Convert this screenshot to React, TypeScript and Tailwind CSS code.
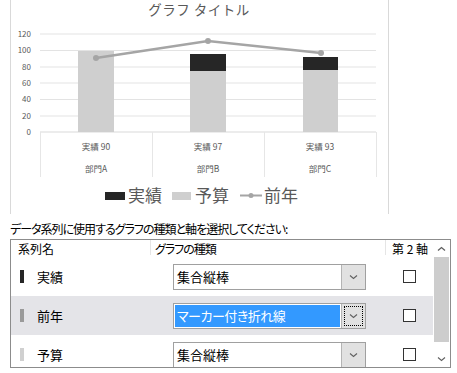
import { ReactElement } from "react";

const FONT = "'Noto Sans CJK JP', 'Noto Sans', sans-serif";

export default function App(): ReactElement {
  return (
    <div className="w-[457px] h-[373px] bg-white overflow-hidden font-['Noto_Sans_CJK_JP',sans-serif] text-black">
      <div className="ml-[10px] w-[379px] h-[214px] border-x border-[#d9d9d9]">
        <Chart />
      </div>
      <p className="ml-[10px] mt-[7px] h-[16px] text-[12px] leading-[16px] tracking-[-1px] [font-feature-settings:'palt'] whitespace-nowrap">
        データ系列に使用するグラフの種類と軸を選択してください:
      </p>
      <div className="ml-[10px] mt-[2px] w-[441px] h-[129px] border border-[#8c8c8c] flex overflow-hidden">
        <div className="flex-1 flex flex-col">
          <Header />
          <Row name="実績" marker="bg-[#262626]" />
          <Row name="前年" marker="bg-[#9a9a9a]" selected />
          <Row name="予算" marker="bg-[#d0d0d0]" />
        </div>
        <Scrollbar />
      </div>
    </div>
  );
}

const Chart = () => {
  const grid = [34, 50.5, 67, 83, 99.5, 116];
  const labels = ["120", "100", "80", "60", "40", "20", "0"];
  const cats = [
    { x: 96, a: "実績 90", b: "部門A" },
    { x: 208, a: "実績 97", b: "部門B" },
    { x: 320, a: "実績 93", b: "部門C" },
  ];
  return (
    <svg width="377" height="214" viewBox="11 0 377 214" fontFamily={FONT}>
      <text x="199" y="15" fontSize="13.5" fill="#595959" textAnchor="middle" letterSpacing="0.5">
        グラフ タイトル
      </text>
      {grid.map((y) => (
        <line key={y} x1="40" x2="376" y1={y} y2={y} stroke="#e3e3e3" strokeWidth="1" />
      ))}
      <line x1="40" x2="376" y1="132" y2="132" stroke="#d9d9d9" strokeWidth="1" />
      {[40, 152, 264, 376].map((x) => (
        <line key={x} x1={x + 0.5} x2={x + 0.5} y1="132" y2="177" stroke="#e6e6e6" strokeWidth="1" />
      ))}
      {labels.map((l, i) => (
        <text key={l} x="31" y={34 + i * 16.33 + 3} fontSize="8" fill="#595959" textAnchor="end">
          {l}
        </text>
      ))}
      {cats.map((c) => (
        <g key={c.b}>
          <text x={c.x} y="150" fontSize="8.5" fill="#595959" textAnchor="middle">
            {c.a}
          </text>
          <text x={c.x} y="172" fontSize="8.5" fill="#595959" textAnchor="middle">
            {c.b}
          </text>
        </g>
      ))}
      {/* bars */}
      <rect x="78" y="51" width="36" height="81" fill="#cfcfcf" />
      <rect x="190" y="71" width="36" height="61" fill="#cfcfcf" />
      <rect x="190" y="54" width="36" height="17" fill="#262626" />
      <rect x="303" y="70" width="35" height="62" fill="#cfcfcf" />
      <rect x="303" y="57" width="35" height="13" fill="#262626" />
      {/* line */}
      <polyline points="96,58 208,41 321,53" fill="none" stroke="#a5a5a5" strokeWidth="2.5" />
      {[
        [96, 58],
        [208, 41],
        [321, 53],
      ].map(([x, y]) => (
        <circle key={x} cx={x} cy={y} r="3" fill="#a5a5a5" />
      ))}
      {/* legend */}
      <rect x="105" y="192" width="20" height="8" fill="#262626" />
      <text x="128" y="202" fontSize="17" fill="#595959">
        実績
      </text>
      <rect x="172" y="192" width="19" height="8" fill="#cfcfcf" />
      <text x="195" y="202" fontSize="17" fill="#595959">
        予算
      </text>
      <line x1="240" x2="262" y1="195.5" y2="195.5" stroke="#a5a5a5" strokeWidth="2" />
      <circle cx="251" cy="195.5" r="2.5" fill="#a5a5a5" />
      <text x="264" y="202" fontSize="17" fill="#595959">
        前年
      </text>
    </svg>
  );
};

const Header = () => {
  return (
    <div className="h-[17px] flex text-[12px] leading-[17px] [font-feature-settings:'palt']">
      <div className="w-[139px] pl-[7px]">系列名</div>
      <div className="w-[235px] flex">
        <div className="w-px h-[15px] bg-[#e5e5e5]" />
        <div className="pl-[4px] tracking-[-1px]">グラフの種類</div>
      </div>
      <div className="flex-1 flex">
        <div className="w-px h-[15px] bg-[#e5e5e5]" />
        <div className="pl-[6px] whitespace-nowrap">第 2 軸</div>
      </div>
    </div>
  );
};

const Chevron = ({ color = "#606060" }: { color?: string }) => (
  <svg width="9" height="6" viewBox="0 0 9 6">
    <path d="M1 1.5 L4.5 4.5 L8 1.5" fill="none" stroke={color} strokeWidth="1.1" />
  </svg>
);

const Row = ({ name, marker, selected }: { name: string; marker: string; selected?: boolean }) => {
  return (
    <div className={`h-[39px] shrink-0 flex items-center ${selected ? "bg-[#e4e4e8]" : "bg-white"}`}>
      <div className="w-[139px] pl-[9px] flex items-center gap-[13px]">
        <div className={`w-[4px] h-[13px] ${marker}`} />
        <span className="text-[13px]">{name}</span>
      </div>
      <div className="w-[235px] pl-[23px]">
        <div className="w-[193px] h-[26px] border border-[#a0a0a0] bg-white flex">
          {selected ? (
            <div className="flex-1 m-px bg-[#3399ff] text-white text-[13px] flex items-center pl-[2px] tracking-[-0.5px] [font-feature-settings:'palt']">
              マーカー付き折れ線
            </div>
          ) : (
            <div className="flex-1 text-[13px] flex items-center pl-[3px]">集合縦棒</div>
          )}
          <div className="w-[24px] bg-[#e1e1e1] border-l border-[#b4b4b4] flex items-center justify-center p-[2px]">
            <div
              className={`w-full h-full flex items-center justify-center ${
                selected ? "border border-dotted border-black" : ""
              }`}
            >
              <Chevron />
            </div>
          </div>
        </div>
      </div>
      <div className="flex-1 flex justify-center">
        <div className="w-[13px] h-[13px] border border-[#333333] bg-white" />
      </div>
    </div>
  );
};

const Scrollbar = () => {
  return (
    <div className="w-[17px] flex flex-col bg-white">
      <div className="h-[17px] flex items-center justify-center">
        <svg width="9" height="6" viewBox="0 0 9 6">
          <path d="M1 4.5 L4.5 1.5 L8 4.5" fill="none" stroke="#606060" strokeWidth="1.3" />
        </svg>
      </div>
      <div className="mx-px h-[85px] bg-[#cdcdcd]" />
      <div className="flex-1" />
      <div className="h-[17px] flex items-center justify-center">
        <Chevron />
      </div>
    </div>
  );
};
